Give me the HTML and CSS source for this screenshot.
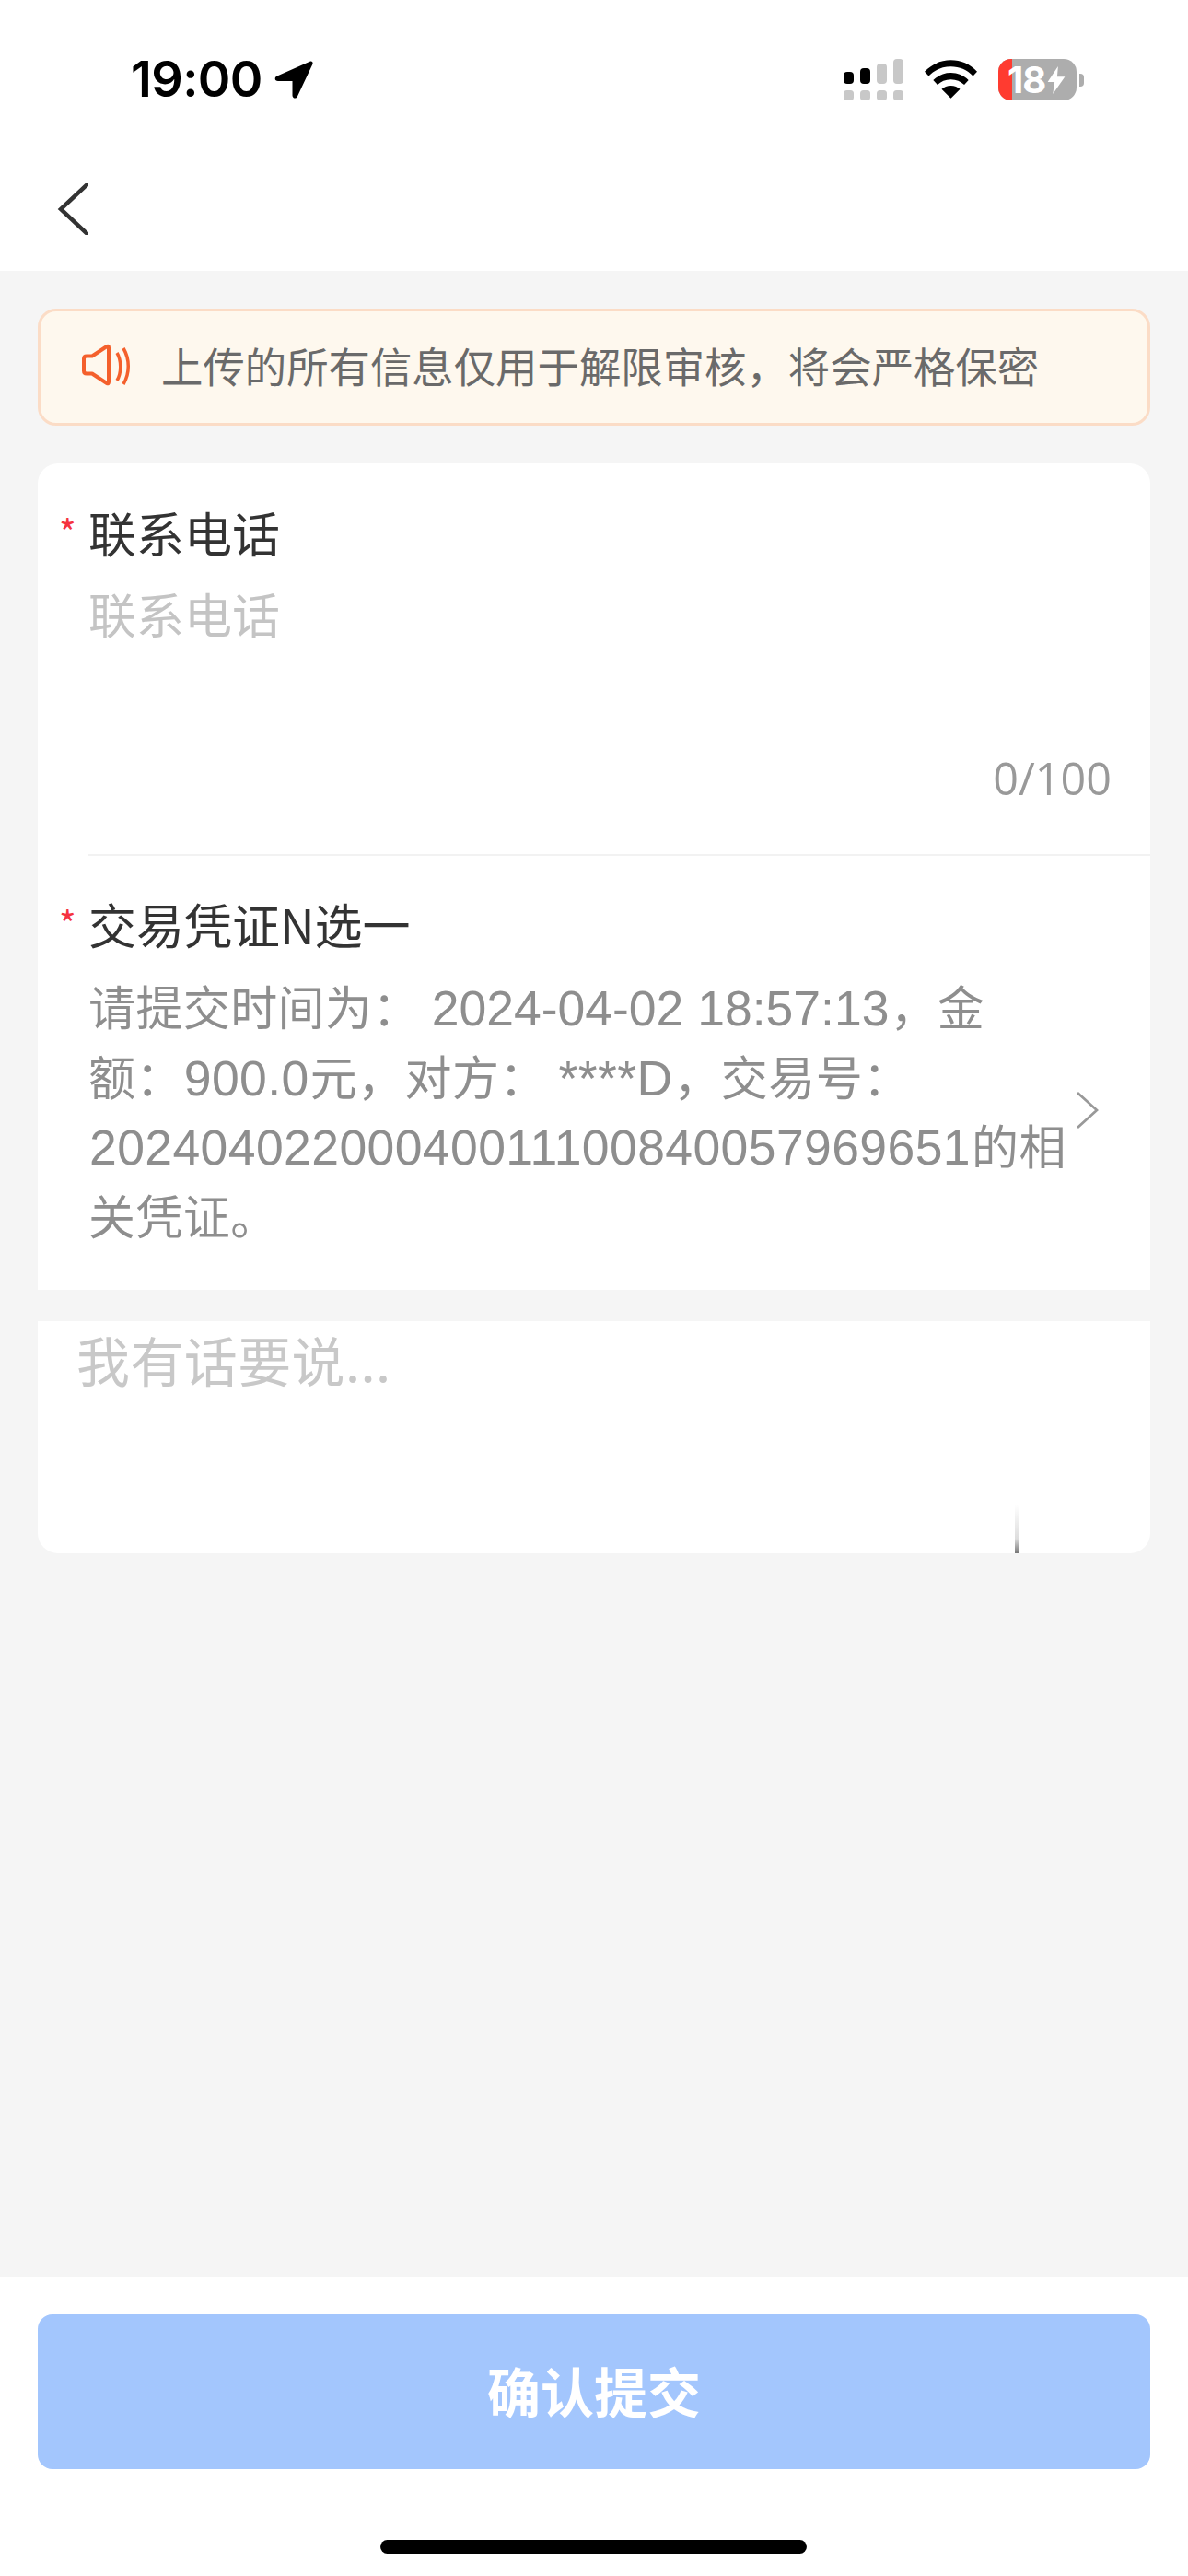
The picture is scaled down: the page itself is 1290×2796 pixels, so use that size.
FILE: index.html
```html
<!DOCTYPE html>
<html lang="zh">
<head>
<meta charset="utf-8">
<title>解限审核</title>
<link rel="stylesheet" href="styles.css">
</head>
<body>
<div class="page">
  <header class="top">
    <div class="status">
      <div class="status-left">
        <span class="time">19:00</span>
        <svg class="loc" width="42" height="41" viewBox="0 0 42 41"><path d="M38.500.8 3 16.500c-3.500 1.600-2.800 5.500 1 5.500h15.500v15.500c0 3.600 4.500 4.200 5.500 1L41.500 3.500c.6-2-1-3.500-3-2.700z" fill="#000"/></svg>
      </div>
      <div class="status-right">
        <svg class="cell" width="65" height="45" viewBox="0 0 65 45"><rect x="0" y="14" width="11" height="13" rx="4" fill="#000"/><rect x="18" y="10" width="11" height="17" rx="4" fill="#000"/><rect x="36" y="5" width="11" height="22" rx="4" fill="#c8c8c8"/><rect x="54" y="0" width="11" height="27" rx="4" fill="#c8c8c8"/><rect x="0" y="34" width="11" height="11" rx="3.500" fill="#c8c8c8"/><rect x="18" y="34" width="11" height="11" rx="3.500" fill="#c8c8c8"/><rect x="36" y="34" width="11" height="11" rx="3.500" fill="#c8c8c8"/><rect x="54" y="34" width="11" height="11" rx="3.500" fill="#c8c8c8"/></svg>
        <svg class="wifi" width="57" height="42" viewBox="0 0 58 42"><path d="M29 0C18 0 8 4.300 0 12.500l4.500 5C11 10.500 19.500 7 29 7s18 3.500 24.500 10.500l4.500-5C50 4.300 40 0 29 0z" fill="#000"/><path d="M29 14c-7.500 0-14 2.800-19.500 8l4.700 5.200C18 23.500 23 21.200 29 21.200s11 2.300 14.800 6l4.700-5.200C43 16.800 36.500 14 29 14z" fill="#000"/><path d="M29 28c-4 0-7.500 1.400-10.200 4L29 42l10.200-10C36.500 29.400 33 28 29 28z" fill="#000"/></svg>
        <div class="battery">
          <div class="battery-body"><span class="battery-level"></span><span class="battery-num">18</span><svg class="bolt" width="20" height="30" viewBox="0 0 20 32"><path d="M12 0 0 18h8l-2 14L20 12h-9z" fill="#fff"/></svg></div>
          <span class="battery-cap"></span>
        </div>
      </div>
    </div>
    <div class="nav">
      <svg class="back" width="34" height="56" viewBox="0 0 34 56"><path d="M35-1 4 28l31 29" fill="none" stroke="#333" stroke-width="4.500"/></svg>
    </div>
  </header>

  <main class="content">
    <div class="notice">
      <svg class="speaker" width="52" height="46" viewBox="0 0 52 46"><path d="M27 3 11 13.500H5c-2 0-3 1.200-3 3v13c0 1.800 1 3 3 3h6L27 43c1.200.700 2 .2 2-1.200V4.200c0-1.400-.8-1.900-2-1.200z" fill="none" stroke="#f4602c" stroke-width="4" stroke-linejoin="round"/><path d="M38 10c5 8 5 22 0 30" fill="none" stroke="#f4602c" stroke-width="3.500"/><path d="M45 5c7 12 7 27 0 39" fill="none" stroke="#f4602c" stroke-width="3.500"/></svg>
      <span class="notice-text">上传的所有信息仅用于解限审核，将会严格保密</span>
    </div>

    <section class="card">
      <div class="field phone">
        <div class="label"><span class="req">*</span>联系电话</div>
        <div class="placeholder">联系电话</div>
        <div class="count">0/100</div>
      </div>
      <div class="field proof">
        <div class="label"><span class="req">*</span>交易凭证N选一</div>
        <div class="proof-row">
          <p class="proof-text">请提交时间为： <span class="num date">2024-04-02 18:57:13</span>，金额：<span class="num">900.0</span>元，对方： <span class="num">****D</span>，交易号：<span class="num">20240402200040011100840057969651</span>的相关凭证。</p>
          <svg class="chev" width="26" height="42" viewBox="0 0 26 42"><path d="M3 2l21 19L3 40" fill="none" stroke="#999" stroke-width="2.800"/></svg>
        </div>
      </div>
    </section>

    <section class="remark">
      <div class="remark-text">我有话要说...</div>
      <span class="caret"></span>
    </section>
  </main>

  <footer class="foot">
    <button class="submit" type="button">确认提交</button>
    <span class="home"></span>
  </footer>
</div>
</body>
</html>
```

FILE: styles.css
```css
* { box-sizing: border-box; }
html, body { margin: 0; padding: 0; }
body {
  width: 1290px;
  height: 2796px;
  overflow: hidden;
  background: #f5f5f5;
  font-family: "Noto Sans CJK SC", "Noto Sans", sans-serif;
}
.page { display: flex; flex-direction: column; height: 2796px; }

.top { background: #fff; height: 294px; flex: none; }
.status {
  height: 176px;
  display: flex;
  justify-content: space-between;
  align-items: flex-start;
  padding: 64px 113px 0 142px;
}
.status-left { display: flex; align-items: center; gap: 13px; height: 44px; }
.time {
  font-family: Inter, sans-serif;
  font-size: 54px;
  line-height: 44px;
  font-weight: 600;
  letter-spacing: -0.6px;
  color: #000;
}
.status-right { display: flex; align-items: flex-start; }
.wifi { margin: 1px 0 0 23px; }
.battery { display: flex; align-items: center; margin-left: 23px; }
.battery-body {
  position: relative;
  display: flex;
  align-items: center;
  width: 85px;
  height: 45px;
  border-radius: 14px;
  background: #adadad;
  padding-left: 10px;
}
.battery-level { position: absolute; left: 0; top: 0; bottom: 0; width: 15px; border-radius: 14px 0 0 14px; background: #ff3b30; }
.battery-num {
  position: relative;
  font-family: Inter, sans-serif;
  font-size: 40px;
  line-height: 45px;
  font-weight: 700;
  letter-spacing: -1px;
  color: #fff;
}
.bolt { position: relative; margin-left: 2px; }
.battery-cap { width: 5px; height: 14px; margin-left: 3px; border-radius: 0 4px 4px 0; background: #adadad; }

.nav { height: 118px; padding: 23px 0 0 62px; }
.back { display: block; }

.content { flex: 1; padding: 41px 41px 0; display: flex; flex-direction: column; }
.notice {
  height: 127px;
  flex: none;
  display: flex;
  align-items: center;
  padding: 0 0 5px 45px;
  gap: 34px;
  background: #fef8ee;
  border: 3px solid #fbdcc6;
  border-radius: 20px;
}
.speaker { flex: none; }
.notice-text { font-size: 45.400px; line-height: 60px; color: #6a6a6a; }

.card {
  margin-top: 41px;
  background: #fff;
  border-radius: 22px 22px 0 0;
  height: 897px;
  flex: none;
  display: flex;
  flex-direction: column;
}
.field { padding-left: 55px; }
.phone { height: 426px; flex: none; position: relative; border-bottom: 2px solid #f2f2f2; margin-left: 55px; padding-left: 0; }
.label {
  position: relative;
  font-size: 52px;
  line-height: 70px;
  color: #333;
}
.phone .label { margin-top: 40px; }
.req {
  position: absolute;
  left: -32px;
  top: 4px;
  color: #f5333f;
  font-size: 40px;
  line-height: 60px;
}
.placeholder { margin-top: 18px; font-size: 52px; line-height: 70px; color: #c4c4c4; }
.count {
  position: absolute;
  right: 42px;
  top: 309px;
  font-family: "Open Sans", sans-serif;
  font-size: 48.500px;
  line-height: 64px;
  color: #999;
}
.proof .label { margin-top: 39px; }
.proof-row { display: flex; align-items: center; margin-top: 16px; }
.proof-text {
  margin: 0;
  width: 1062px;
  flex: none;
  font-size: 51px;
  line-height: 75.500px;
  letter-spacing: 0.4px;
  color: #8e8e8e;
}
.num { font-family: "Liberation Sans", sans-serif; font-size: 53.500px; line-height: 1; margin: 0 1px; }
.date { letter-spacing: 0; }
.chev { flex: none; margin-left: 9px; }

.remark {
  position: relative;
  margin-top: 34px;
  height: 252px;
  flex: none;
  background: #fff;
  border-radius: 0 0 22px 22px;
  padding: 3px 0 0 42px;
}
.remark-text { font-size: 58px; line-height: 76px; letter-spacing: 0.4px; color: #c8c8c8; }
.caret {
  position: absolute;
  left: 1061px;
  top: 199px;
  width: 4px;
  height: 53px;
  background: linear-gradient(to bottom, #fff, #ddd 70%, #777);
}

.foot {
  position: relative;
  flex: none;
  height: 325px;
  background: #fff;
  padding: 41px 41px 0;
}
.submit {
  display: block;
  width: 100%;
  height: 168px;
  border: 0;
  border-radius: 16px;
  padding: 0 0 4px;
  background: #a3c6fd;
  color: #fff;
  font-family: "Noto Sans CJK SC", sans-serif;
  font-size: 58px;
  font-weight: 700;
}
.home {
  position: absolute;
  left: 413px;
  top: 286px;
  width: 463px;
  height: 15px;
  border-radius: 7.500px;
  background: #000;
}
```
